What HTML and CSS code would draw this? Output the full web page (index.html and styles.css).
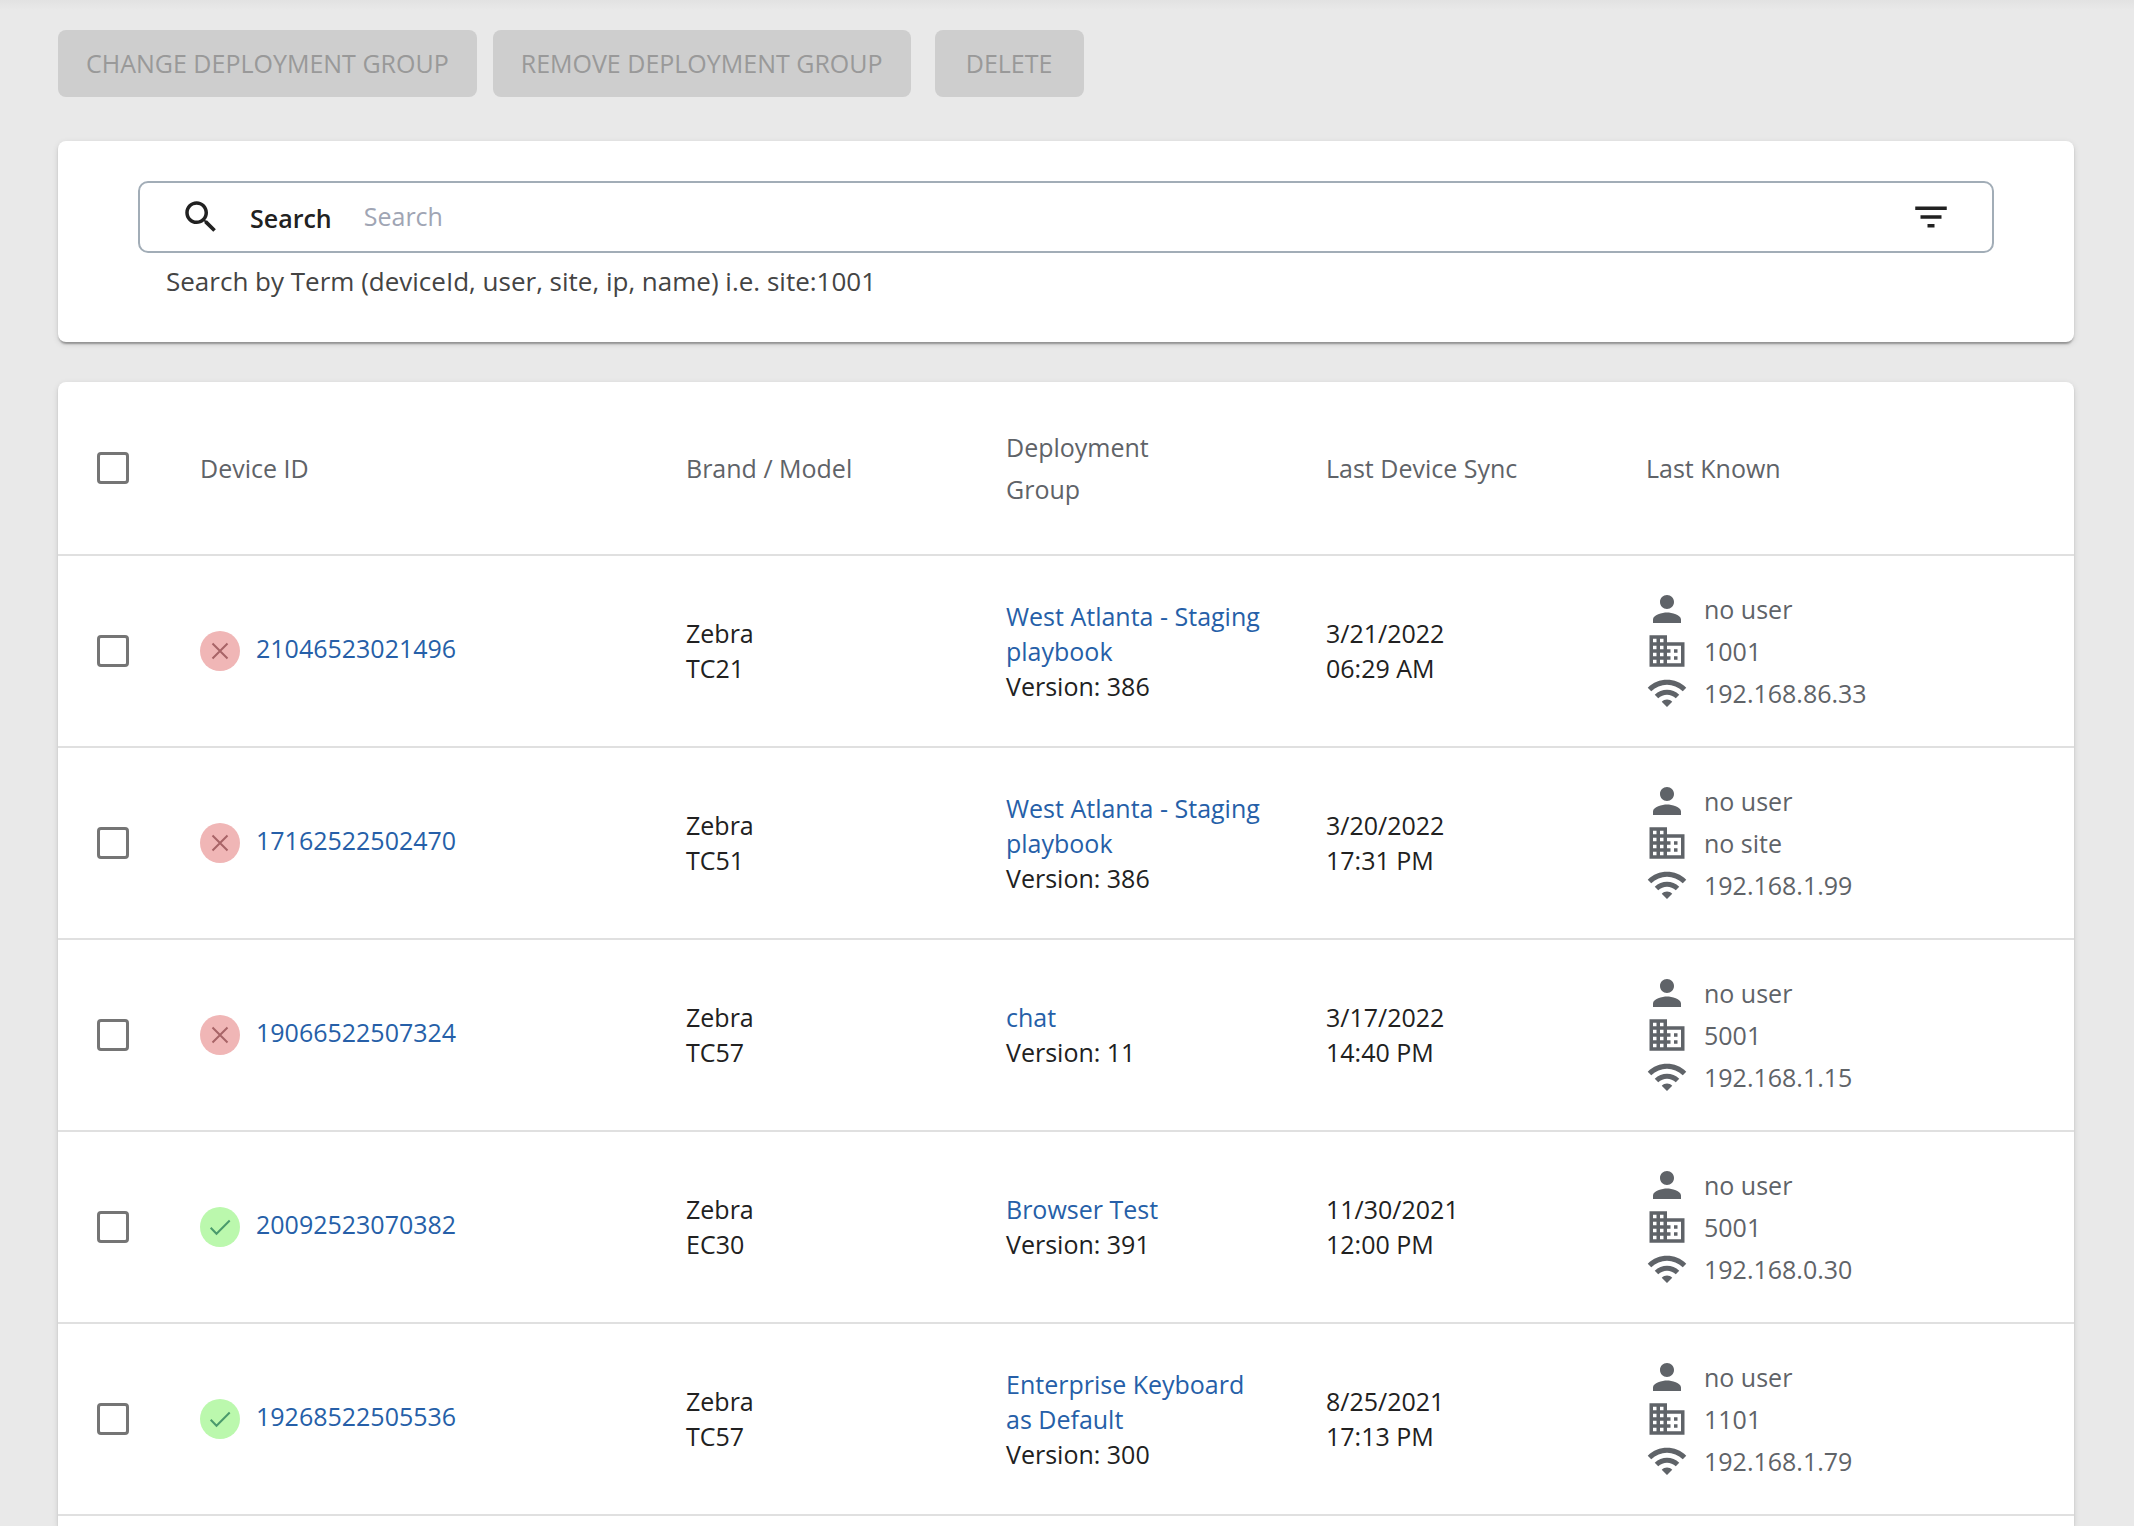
FILE: index.html
```html
<!DOCTYPE html>
<html lang="en">
    <head>
        <meta charset="utf-8">
        <title>Devices</title>
        <link rel="stylesheet" href="styles.css">
    </head>
    <body>
        <!-- shared icons -->
        <svg class="sprite" aria-hidden="true">
            <symbol id="icon-person" viewBox="0 0 24 24">
                <path d="M12 12c2.21 0 4-1.79 4-4s-1.79-4-4-4-4 1.79-4 4 1.79 4 4 4zm0 2c-2.67 0-8 1.34-8 4v2h16v-2c0-2.66-5.33-4-8-4z"/>
            </symbol>
            <symbol id="icon-site" viewBox="0 0 24 24">
                <path d="M12 7V3H2v18h20V7H12zM6 19H4v-2h2v2zm0-4H4v-2h2v2zm0-4H4V9h2v2zm0-4H4V5h2v2zm4 12H8v-2h2v2zm0-4H8v-2h2v2zm0-4H8V9h2v2zm0-4H8V5h2v2zm10 12h-8v-2h2v-2h-2v-2h2v-2h-2V9h8v10zm-2-8h-2v2h2v-2zm0 4h-2v2h2v-2z"/>
            </symbol>
            <symbol id="icon-wifi" viewBox="0 0 24 24">
                <path d="M1 9l2 2c4.97-4.97 13.03-4.97 18 0l2-2C16.93 2.93 7.08 2.93 1 9zm8 8l3 3 3-3c-1.65-1.66-4.34-1.66-6 0zm-4-4l2 2c2.76-2.76 7.24-2.76 10 0l2-2C15.14 9.14 8.87 9.14 5 13z"/>
            </symbol>
            <symbol id="icon-cross" viewBox="0 0 40 40">
                <circle cx="20" cy="20" r="20" fill="#f0b6b6"/>
                <path d="M12.500 12.500L27.500 27.500M27.500 12.500L12.500 27.500" fill="none" stroke="#a86467" stroke-width="2"/>
            </symbol>
            <symbol id="icon-check" viewBox="0 0 40 40">
                <circle cx="20" cy="20" r="20" fill="#bbf8ad"/>
                <path d="M10.700 20.700L16.500 26.700L29.700 13.500" fill="none" stroke="#4a9a6c" stroke-width="2"/>
            </symbol>
        </svg>

        <div class="actions">
            <button class="action-button" disabled>CHANGE DEPLOYMENT GROUP</button>
            <button class="action-button" disabled>REMOVE DEPLOYMENT GROUP</button>
            <button class="action-button delete-button" disabled>DELETE</button>
        </div>

        <div class="card search-card">
            <div class="searchbox">
                <svg class="icon" viewBox="0 0 24 24" aria-hidden="true">
                    <path d="M15.500 14h-.79l-.28-.27C15.410 12.590 16 11.110 16 9.500 16 5.910 13.090 3 9.500 3S3 5.910 3 9.500 5.910 16 9.500 16c1.610 0 3.090-.59 4.230-1.570l.27.28v.79l5 4.990L20.490 19l-4.990-5zm-6 0C7.010 14 5 11.990 5 9.500S7.010 5 9.500 5 14 7.010 14 9.500 11.990 14 9.500 14z"/>
                </svg>
                <label for="search">Search</label>
                <input type="text" id="search" placeholder="Search">
                <button class="filter-button" aria-label="Filter">
                    <svg class="icon" viewBox="0 0 24 24">
                        <path d="M10 18h4v-2h-4v2zM3 6v2h18V6H3zm3 7h12v-2H6v2z"/>
                    </svg>
                </button>
            </div>
            <p class="help">Search by Term (deviceId, user, site, ip, name) i.e. site:1001</p>
        </div>

        <div class="card list-card">
            <table class="devices">
                <colgroup>
                    <col class="col-check">
                    <col class="col-device">
                    <col class="col-text">
                    <col class="col-text">
                    <col class="col-text">
                    <col>
                </colgroup>
                <thead>
                    <tr>
                        <th class="check"><input type="checkbox" aria-label="Select all"></th>
                        <th>Device ID</th>
                        <th>Brand / Model</th>
                        <th>Deployment<br>Group</th>
                        <th>Last Device Sync</th>
                        <th>Last Known</th>
                    </tr>
                </thead>
                <tbody>
                    <tr>
                        <td class="check"><input type="checkbox" aria-label="Select 21046523021496"></td>
                        <td>
                            <div class="device">
                                <svg class="status"><use href="#icon-cross"/></svg>
                                <a href="#">21046523021496</a>
                            </div>
                        </td>
                        <td>Zebra<br>TC21</td>
                        <td><a href="#">West Atlanta - Staging playbook</a><br>Version: 386</td>
                        <td>3/21/2022<br>06:29 AM</td>
                        <td>
                            <ul class="known">
                                <li><svg class="icon"><use href="#icon-person"/></svg>no user</li>
                                <li><svg class="icon"><use href="#icon-site"/></svg>1001</li>
                                <li><svg class="icon"><use href="#icon-wifi"/></svg>192.168.86.33</li>
                            </ul>
                        </td>
                    </tr>
                    <tr>
                        <td class="check"><input type="checkbox" aria-label="Select 17162522502470"></td>
                        <td>
                            <div class="device">
                                <svg class="status"><use href="#icon-cross"/></svg>
                                <a href="#">17162522502470</a>
                            </div>
                        </td>
                        <td>Zebra<br>TC51</td>
                        <td><a href="#">West Atlanta - Staging playbook</a><br>Version: 386</td>
                        <td>3/20/2022<br>17:31 PM</td>
                        <td>
                            <ul class="known">
                                <li><svg class="icon"><use href="#icon-person"/></svg>no user</li>
                                <li><svg class="icon"><use href="#icon-site"/></svg>no site</li>
                                <li><svg class="icon"><use href="#icon-wifi"/></svg>192.168.1.99</li>
                            </ul>
                        </td>
                    </tr>
                    <tr>
                        <td class="check"><input type="checkbox" aria-label="Select 19066522507324"></td>
                        <td>
                            <div class="device">
                                <svg class="status"><use href="#icon-cross"/></svg>
                                <a href="#">19066522507324</a>
                            </div>
                        </td>
                        <td>Zebra<br>TC57</td>
                        <td><a href="#">chat</a><br>Version: 11</td>
                        <td>3/17/2022<br>14:40 PM</td>
                        <td>
                            <ul class="known">
                                <li><svg class="icon"><use href="#icon-person"/></svg>no user</li>
                                <li><svg class="icon"><use href="#icon-site"/></svg>5001</li>
                                <li><svg class="icon"><use href="#icon-wifi"/></svg>192.168.1.15</li>
                            </ul>
                        </td>
                    </tr>
                    <tr>
                        <td class="check"><input type="checkbox" aria-label="Select 20092523070382"></td>
                        <td>
                            <div class="device">
                                <svg class="status"><use href="#icon-check"/></svg>
                                <a href="#">20092523070382</a>
                            </div>
                        </td>
                        <td>Zebra<br>EC30</td>
                        <td><a href="#">Browser Test</a><br>Version: 391</td>
                        <td>11/30/2021<br>12:00 PM</td>
                        <td>
                            <ul class="known">
                                <li><svg class="icon"><use href="#icon-person"/></svg>no user</li>
                                <li><svg class="icon"><use href="#icon-site"/></svg>5001</li>
                                <li><svg class="icon"><use href="#icon-wifi"/></svg>192.168.0.30</li>
                            </ul>
                        </td>
                    </tr>
                    <tr>
                        <td class="check"><input type="checkbox" aria-label="Select 19268522505536"></td>
                        <td>
                            <div class="device">
                                <svg class="status"><use href="#icon-check"/></svg>
                                <a href="#">19268522505536</a>
                            </div>
                        </td>
                        <td>Zebra<br>TC57</td>
                        <td><a href="#">Enterprise Keyboard as Default</a><br>Version: 300</td>
                        <td>8/25/2021<br>17:13 PM</td>
                        <td>
                            <ul class="known">
                                <li><svg class="icon"><use href="#icon-person"/></svg>no user</li>
                                <li><svg class="icon"><use href="#icon-site"/></svg>1101</li>
                                <li><svg class="icon"><use href="#icon-wifi"/></svg>192.168.1.79</li>
                            </ul>
                        </td>
                    </tr>
                </tbody>
            </table>
        </div>
    </body>
</html>
```

FILE: styles.css
```css
* {
    box-sizing: border-box;
}
body {
    margin: 0;
    padding: 30px 60px 0 58px;
    min-height: 100vh;
    display: flex;
    flex-direction: column;
    background: linear-gradient(to bottom, #e2e2e2, #e9e9e9 10px);
    font-family: "Open Sans", sans-serif;
    font-size: 25px;
    line-height: 35px;
    color: #212121;
}
button,
input {
    font-family: inherit;
    font-size: inherit;
}
a {
    color: #265fa8;
    text-decoration: none;
}
.sprite {
    display: none;
}
.icon {
    width: 42px;
    height: 42px;
    flex: none;
    fill: currentColor;
}

/* buttons */
.actions {
    display: flex;
    gap: 16px;
    margin-bottom: 44px;
}
.action-button {
    height: 67px;
    min-width: 149px;
    padding: 0 28px 2px;
    border: none;
    border-radius: 8px;
    background-color: #cecece;
    color: #999999;
}
.delete-button {
    margin-left: 8px;
}

/* cards */
.card {
    background-color: white;
    border-radius: 8px;
    box-shadow: 0 4px 2px -2px rgba(0, 0, 0, 0.2), 0 2px 2px rgba(0, 0, 0, 0.14), 0 2px 6px rgba(0, 0, 0, 0.12);
}
.search-card {
    padding: 40px 80px 43px;
    margin-bottom: 40px;
}
.list-card {
    flex: 1;
    border-radius: 8px 8px 0 0;
}

/* search */
.searchbox {
    height: 72px;
    padding: 0 40px;
    display: flex;
    align-items: center;
    border: 2px solid #a2adb7;
    border-radius: 10px;
}
.searchbox label {
    margin-left: 28px;
    padding-top: 2px;
    font-weight: 600;
}
.searchbox input {
    flex: 1;
    height: 100%;
    margin-left: 32px;
    padding: 0 0 2px;
    border: none;
    outline: none;
    background: none;
}
.searchbox input::placeholder {
    color: #a0a5b4;
}
.filter-button {
    display: flex;
    padding: 0;
    border: none;
    background: none;
    color: #212121;
}
.help {
    margin: 10px 0 0;
    padding-left: 28px;
    font-size: 26px;
    line-height: 36px;
    color: #444444;
}

/* device table */
.devices {
    width: 100%;
    table-layout: fixed;
    border-collapse: separate;
    border-spacing: 0;
}
.col-check {
    width: 142px;
}
.col-device {
    width: 486px;
}
.col-text {
    width: 320px;
}
.devices th,
.devices td {
    padding: 0 64px 0 0;
    border-bottom: 2px solid #e0e0e0;
    text-align: left;
    vertical-align: middle;
}
.devices th {
    height: 174px;
    line-height: 42px;
    font-weight: 400;
    color: #5f6368;
}
.devices td {
    height: 192px;
}
.devices .check {
    padding: 0 0 0 39px;
}
.check input {
    appearance: none;
    display: block;
    width: 32px;
    height: 32px;
    margin: 0;
    border: 3px solid #757575;
    border-radius: 4px;
}
.check input:checked {
    background-color: #757575;
}
.device {
    display: flex;
    align-items: center;
    gap: 16px;
}
.device a {
    padding-bottom: 6px;
}
.status {
    width: 40px;
    height: 40px;
}
.known {
    margin: 0;
    padding: 0;
    list-style: none;
    color: #5f6368;
}
.known li {
    display: flex;
    align-items: center;
    gap: 16px;
    line-height: 42px;
}
```
